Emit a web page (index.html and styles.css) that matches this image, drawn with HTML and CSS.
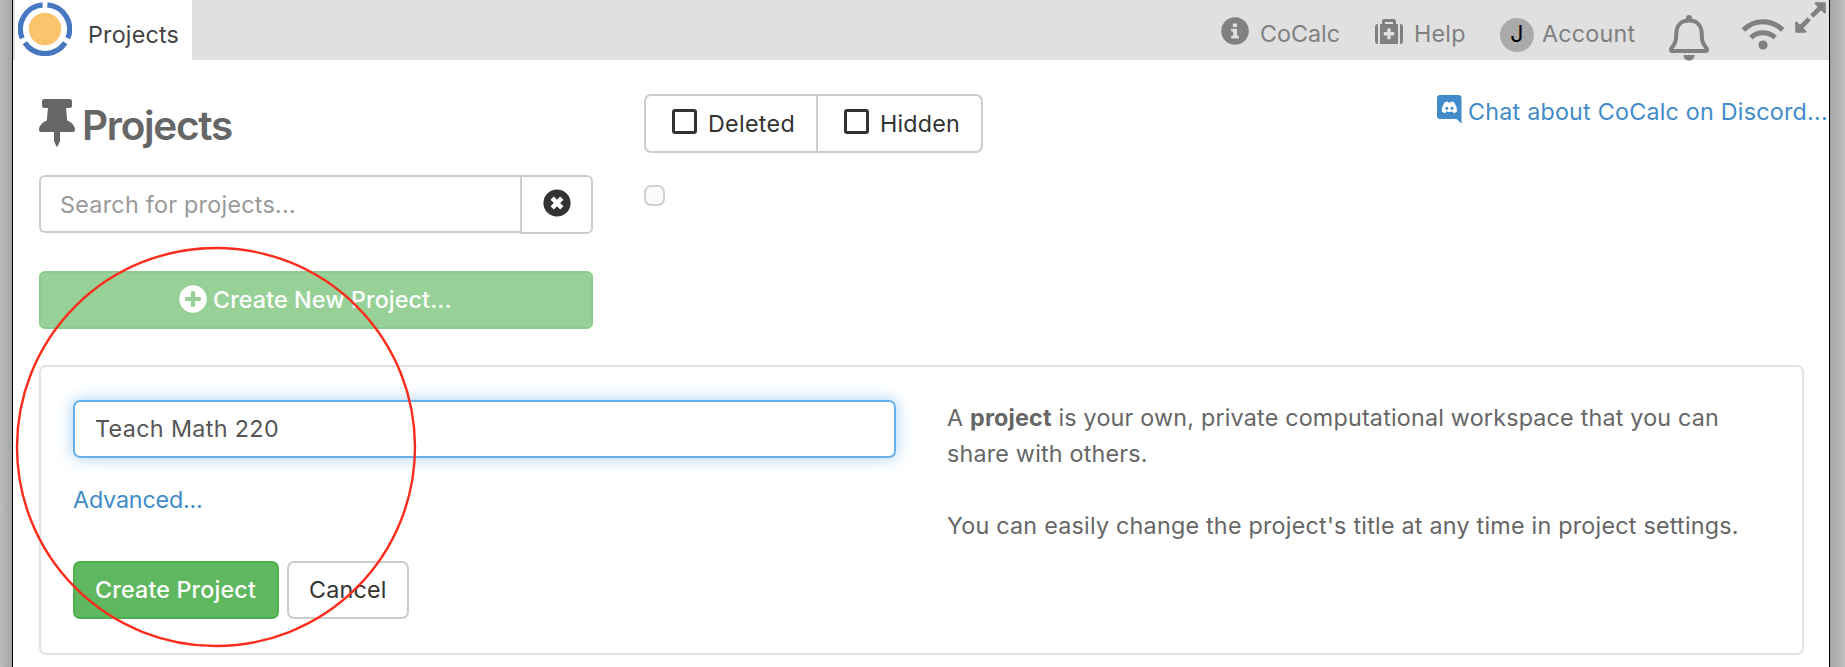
FILE: index.html
```html
<!DOCTYPE html>
<html lang="en">
<head>
<meta charset="utf-8">
<title>Projects</title>
<link rel="stylesheet" href="styles.css">
</head>
<body>
<div class="window">
  <header class="topbar">
    <div class="tab">
      <svg class="logo" width="54" height="54" viewBox="0 0 54 54">
        <circle cx="27" cy="27" r="16.2" fill="#fbc36c"/>
        <g fill="none" stroke="#4678c2" stroke-width="5.2">
          <path d="M24.6 2.8A24.3 24.3 0 0 0 4.200 36.300"/>
          <path d="M29.4 2.8A24.3 24.3 0 0 1 49.800 36.300"/>
          <path d="M6.800 40.800A24.3 24.3 0 0 0 47.200 40.800"/>
        </g>
      </svg>
      <span class="tab-label">Projects</span>
    </div>
    <nav class="nav">
      <div class="item info">
        <svg width="28" height="28" viewBox="0 0 28 28"><circle cx="14" cy="14" r="13.8" fill="#808080"/><path fill="#e0e0e0" d="M11.8 6.4h4.2v3.7h-4.2zM10.2 11.8h5.9v7h1.8v2.8h-7.7v-2.8h1.9v-4.2h-1.9z"/></svg>
        <span class="lbl t-cocalc">CoCalc</span>
      </div>
      <div class="item help">
        <svg width="28" height="26" viewBox="0 0 28 26"><g fill="#808080"><path d="M3 5v20C1 25 0 24 0 22V8C0 6 1 5 3 5zM25 5v20c2 0 3-1 3-3V8c0-2-1-3-3-3z"/><path fill-rule="evenodd" d="M5 5h2V2.200Q7 0 9.200 0h9.600Q21 0 21 2.200V5h2v20H5zM10 3v2h8V3z"/></g><path fill="#e0e0e0" d="M12.300 9.500h3.400v3.600h3.500v3.500h-3.500v3.600h-3.400v-3.600H8.800v-3.500h3.500z"/></svg>
        <span class="lbl t-help">Help</span>
      </div>
      <div class="item account">
        <span class="avatar">J</span>
        <span class="lbl t-account">Account</span>
      </div>
      <div class="item bell">
        <svg width="40" height="46" viewBox="0 0 40 46"><path d="M17 4V3a3 3 0 0 1 6 0v1" fill="#808080"/><path d="M20 5.500C11.500 5.500 7.300 11 7.300 19c0 8-1.500 10-5 14.500-.9 1.500-.3 2.500 1 2.500h33.400c1.300 0 1.900-1 1-2.500-3.500-4.500-5-6.500-5-14.500 0-8-4.200-13.500-12.700-13.500z" fill="none" stroke="#808080" stroke-width="4"/><path d="M14.500 40h11c0 3.500-2.300 5.500-5.500 5.500s-5.500-2-5.500-5.500z" fill="#808080"/></svg>
      </div>
      <div class="item wifi">
        <svg width="44" height="31" viewBox="0 0 44 31"><g fill="none" stroke="#808080" stroke-width="5"><path d="M2.300 10.800Q11 2.700 22 2.700T41.700 10.800"/><path d="M9.800 18.600Q15.500 13.800 22 13.800T34.200 18.600"/></g><circle cx="22" cy="26" r="4.600" fill="#808080"/></svg>
      </div>
      <div class="item expand">
        <svg width="31" height="31" viewBox="0 0 31 31"><g fill="#808080" stroke="#808080" stroke-width="2" stroke-linejoin="round"><path d="M20.500 1.200H29.800V10.500z"/><path d="M1.200 20.500V29.800H10.500z"/></g><path d="M16.800 14.200L26 5M14.200 16.800L5 26" stroke="#808080" stroke-width="4.600"/></svg>
      </div>
    </nav>
  </header>

  <main class="page">
    <div class="top">
      <div class="left">
        <h1 class="title">
          <svg width="36" height="48" viewBox="0 0 36 48"><path fill="#666" d="M5.500 0h25q2.500 0 2.500 2.500v4Q33 9 30.500 9H27l1.200 12.500C33 23.500 36 27 36 31q0 2-2 2H21v9l-2.200 5q-.8 1.600-1.600 0L15 42v-9H2q-2 0-2-2c0-4 3-7.500 7.800-9.500L9 9H5.500Q3 9 3 6.500v-4Q3 0 5.500 0z"/></svg>
          <span class="t-title">Projects</span>
        </h1>
        <div class="search">
          <div class="search-input"><span class="t-search">Search for projects...</span></div>
          <div class="search-clear">
            <svg width="28" height="28" viewBox="0 0 28 28"><circle cx="14" cy="14" r="13.600" fill="#333"/><path d="M9.200 9.200l9.600 9.600M18.800 9.200l-9.600 9.600" stroke="#fff" stroke-width="4.600"/></svg>
          </div>
        </div>
        <div class="btn-new">
          <svg width="28" height="28" viewBox="0 0 28 28"><circle cx="14" cy="14" r="13.700" fill="#fff"/><path d="M14 6.200v15.600M6.200 14h15.600" stroke="#97d197" stroke-width="4.200"/></svg>
          <span class="t-new">Create New Project...</span>
        </div>
      </div>
      <div class="filters">
        <div class="group">
          <div class="toggle deleted"><i class="box"></i><span class="t-deleted">Deleted</span></div>
          <div class="toggle hidden"><i class="box"></i><span class="t-hidden">Hidden</span></div>
        </div>
        <div class="stub"></div>
      </div>
      <a class="discord">
        <svg width="25" height="29" viewBox="0 0 25 29"><path fill="#428bca" d="M3 0h18.500q3 0 3 3v25.500L19.500 24H3q-3 0-3-3V3q0-3 3-3z"/><path fill="#fff" d="M7.500 7.500Q9 6.600 10.500 6.500l.6 1h2.600l.6-1q1.500.1 3 1 2.800 4 2.700 9-1.600 1.500-3.600 1.500l-.9-1.400q-3.100.9-6.200 0L8.400 18q-2 0-3.600-1.500-.1-5 2.700-9z"/><circle cx="9.800" cy="13.200" r="1.500" fill="#428bca"/><circle cx="15" cy="13.200" r="1.500" fill="#428bca"/></svg>
        <span class="t-discord">Chat about CoCalc on Discord...</span>
      </a>
    </div>

    <section class="panel">
      <div class="form">
        <div class="name-input"><span class="t-teach">Teach Math 220</span></div>
        <a class="advanced">Advanced...</a>
        <div class="actions">
          <div class="btn primary">Create Project</div>
          <div class="btn plain">Cancel</div>
        </div>
      </div>
      <div class="about">
        <p>A <b>project</b> is your own, private computational workspace that you can<br>share with others.</p>
        <p class="note">You can easily change the project's title at any time in project settings.</p>
      </div>
    </section>
  </main>
</div>
<svg class="annotation" width="404" height="404" viewBox="0 0 404 404"><circle cx="202" cy="202" r="199" fill="none" stroke="#fc2d1c" stroke-width="2.400"/></svg>
</body>
</html>
```
FILE: styles.css
```css
* { box-sizing: border-box; }
body {
  margin: 0;
  height: 667px;
  overflow: hidden;
  position: relative;
  padding: 0 15px 0 12px;
  background: linear-gradient(90deg, #bdbdbd 0, #a6a6a6 12px, #a6a6a6 1830px, #c0c0c0 1845px);
  font-family: Inter, "Liberation Sans", sans-serif;
  font-size: 23.3px;
  line-height: 36px;
  letter-spacing: 0.2px;
  color: #666;
}
svg { display: block; flex: none; }
span { white-space: nowrap; }
.window { height: 667px; background: #fff; border: solid #000; border-width: 0 1px; }

/* Top bar */
.topbar { display: flex; justify-content: space-between; height: 60px; padding-left: 2px; background: #e0e0e0; }
.tab { display: flex; width: 177px; height: 60px; padding: 2px 0 0 3px; background: #fff; color: #434343; }
.tab-label { margin: 15px 0 0 16px; }
.nav { display: flex; color: #808080; }
.item { display: flex; align-items: flex-start; height: 60px; }
.lbl { margin-top: 16px; }
.info { width: 154px; letter-spacing: 0; }
.info svg { margin: 17px 11px 0 0; }
.help { width: 125px; }
.help svg { margin: 19px 11px 0 0; }
.account { width: 169px; }
.avatar { width: 34px; height: 34px; margin: 18px 8px 0 0; border-radius: 50%; background: #aaa; color: #000; text-align: center; line-height: 32px; }
.bell { width: 72px; padding-top: 15px; }
.wifi { width: 54px; padding-top: 19px; }
.expand { width: 34px; padding-top: 2px; }

/* Search, filters and links */
.page { padding: 34px 0 0 26px; }
.top { display: flex; height: 271px; }
.left { width: 554px; margin-right: 51px; }
.title { display: flex; align-items: flex-start; height: 81px; margin: 0; padding-top: 5px; font-size: 40.5px; font-weight: 600; line-height: 50px; letter-spacing: -1.3px; }
.t-title { margin: 2px 0 0 7px; }
.search { display: flex; height: 59px; }
.search-input { width: 482px; height: 58px; padding-left: 19px; border: 2px solid #ccc; border-right: 0; border-radius: 6px 0 0 6px; line-height: 56px; letter-spacing: 0.27px; color: #999; }
.search-clear { display: flex; width: 73px; margin-left: -1px; height: 59px; border: 2px solid #ccc; border-radius: 0 6px 6px 0; padding: 12px 0 0 21px; }
.btn-new { display: flex; height: 58px; margin-top: 37px; padding: 12px 0 0 138px; gap: 6px; border: 2px solid #8ccc8c; border-radius: 6px; background: #97d197; color: #fff; font-weight: 500; line-height: 30px; letter-spacing: 0.1px; }
.filters { width: 339px; }
.group { display: flex; height: 59px; border: 2px solid #ccc; border-radius: 7px; color: #333; }
.toggle { display: flex; line-height: 56px; }
.deleted { width: 172px; padding-left: 26px; border-right: 2px solid #ccc; letter-spacing: 0.3px; }
.hidden { padding-left: 26px; }
.box { width: 25px; height: 25px; margin: 13px 11px 0 0; border: 3px solid #333; border-radius: 3px; }
.stub { width: 21px; height: 21px; margin-top: 32px; border: 2px solid #d0d0d0; border-radius: 7px; background: #fafafa; }
.discord { display: flex; margin-left: 454px; gap: 6px; letter-spacing: 0.22px; color: #428bca; }
.discord svg { margin-top: 1px; }

/* New project panel */
.panel { display: flex; width: 1765px; height: 290px; padding: 33px 0 0 32px; border: 2px solid #e3e3e3; border-radius: 7px; }
.form { width: 823px; margin-right: 51px; }
.name-input { height: 58px; padding-left: 20px; border: 2px solid #66afe9; border-radius: 7px; box-shadow: 0 0 16px rgba(102, 175, 233, .6); line-height: 54px; letter-spacing: 0.36px; color: #555; }
.advanced { display: block; margin-top: 24px; letter-spacing: -0.18px; color: #428bca; }
.actions { display: flex; gap: 8px; margin-top: 43px; }
.btn { height: 58px; border: 2px solid #ccc; border-radius: 7px; line-height: 54px; padding-left: 20px; }
.primary { width: 206px; border-color: #4cae4c; background: #5fb760; color: #fff; font-weight: 500; letter-spacing: 0.15px; }
.plain { width: 122px; color: #333; }
.about { white-space: nowrap; }
.about p { margin: 0 0 36px; }
.about .note { letter-spacing: 0.235px; }
.about b { font-weight: 700; }

/* Hand-drawn style highlight over the form */
.annotation { position: absolute; left: 14px; top: 245px; }
```
